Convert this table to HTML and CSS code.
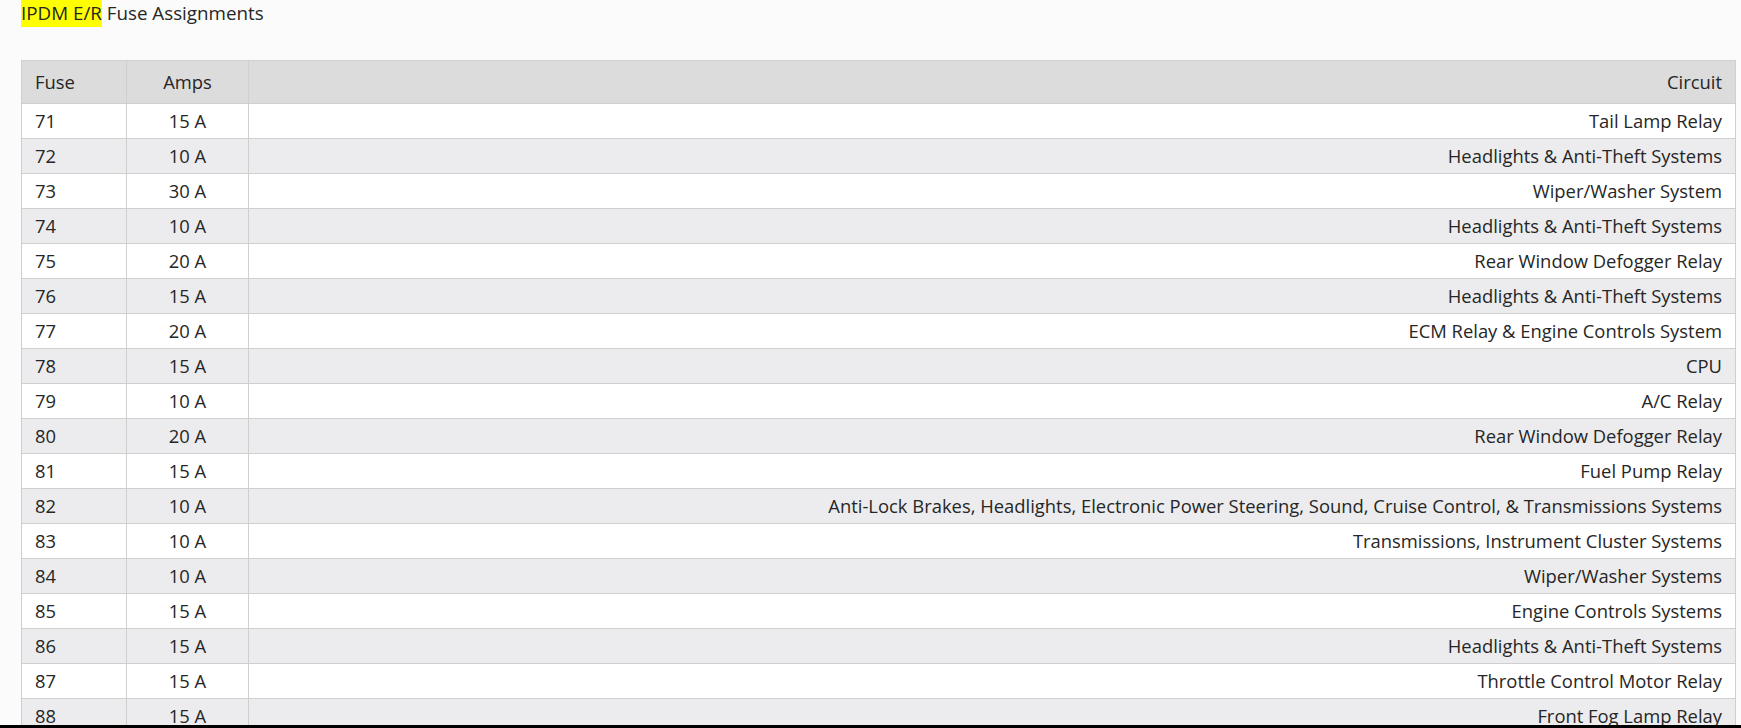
FILE: index.html
```html
<!DOCTYPE html>
<html lang="en">
<head>
<meta charset="utf-8">
<title>IPDM E/R Fuse Assignments</title>
<link rel="stylesheet" href="styles.css">
</head>
<body>
<div class="page">
  <h2 class="title"><span class="mark">IPDM E/R</span> Fuse Assignments</h2>
  <table class="fuses">
    <thead>
      <tr><th class="c-fuse">Fuse</th><th class="c-amps">Amps</th><th class="c-circuit">Circuit</th></tr>
    </thead>
    <tbody>
      <tr><td class="c-fuse">71</td><td class="c-amps">15 A</td><td class="c-circuit">Tail Lamp Relay</td></tr>
      <tr><td class="c-fuse">72</td><td class="c-amps">10 A</td><td class="c-circuit">Headlights &amp; Anti-Theft Systems</td></tr>
      <tr><td class="c-fuse">73</td><td class="c-amps">30 A</td><td class="c-circuit">Wiper/Washer System</td></tr>
      <tr><td class="c-fuse">74</td><td class="c-amps">10 A</td><td class="c-circuit">Headlights &amp; Anti-Theft Systems</td></tr>
      <tr><td class="c-fuse">75</td><td class="c-amps">20 A</td><td class="c-circuit">Rear Window Defogger Relay</td></tr>
      <tr><td class="c-fuse">76</td><td class="c-amps">15 A</td><td class="c-circuit">Headlights &amp; Anti-Theft Systems</td></tr>
      <tr><td class="c-fuse">77</td><td class="c-amps">20 A</td><td class="c-circuit">ECM Relay &amp; Engine Controls System</td></tr>
      <tr><td class="c-fuse">78</td><td class="c-amps">15 A</td><td class="c-circuit">CPU</td></tr>
      <tr><td class="c-fuse">79</td><td class="c-amps">10 A</td><td class="c-circuit">A/C Relay</td></tr>
      <tr><td class="c-fuse">80</td><td class="c-amps">20 A</td><td class="c-circuit">Rear Window Defogger Relay</td></tr>
      <tr><td class="c-fuse">81</td><td class="c-amps">15 A</td><td class="c-circuit">Fuel Pump Relay</td></tr>
      <tr><td class="c-fuse">82</td><td class="c-amps">10 A</td><td class="c-circuit">Anti-Lock Brakes, Headlights, Electronic Power Steering, Sound, Cruise Control, &amp; Transmissions Systems</td></tr>
      <tr><td class="c-fuse">83</td><td class="c-amps">10 A</td><td class="c-circuit">Transmissions, Instrument Cluster Systems</td></tr>
      <tr><td class="c-fuse">84</td><td class="c-amps">10 A</td><td class="c-circuit">Wiper/Washer Systems</td></tr>
      <tr><td class="c-fuse">85</td><td class="c-amps">15 A</td><td class="c-circuit">Engine Controls Systems</td></tr>
      <tr><td class="c-fuse">86</td><td class="c-amps">15 A</td><td class="c-circuit">Headlights &amp; Anti-Theft Systems</td></tr>
      <tr><td class="c-fuse">87</td><td class="c-amps">15 A</td><td class="c-circuit">Throttle Control Motor Relay</td></tr>
      <tr><td class="c-fuse">88</td><td class="c-amps">15 A</td><td class="c-circuit">Front Fog Lamp Relay</td></tr>
    </tbody>
  </table>
</div>
<div class="bottom-bar"></div>
</body>
</html>
```

FILE: styles.css
```css
html, body {
  margin: 0;
  padding: 0;
}
body {
  background-color: #fbfbfb;
  font-family: "Open Sans", "Liberation Sans", sans-serif;
  color: #262626;
  overflow: hidden;
}
.page {
  padding: 0 5px 0 21px;
}
.title {
  margin: 0;
  font-size: 18.8px;
  font-weight: 400;
  line-height: 27px;
  height: 27px;
}
.mark {
  background: #ffff00;
  display: inline-block;
  height: 27px;
}
.fuses {
  margin-top: 33px;
  width: 100%;
  border-collapse: collapse;
  font-size: 18.4px;
  background: #ffffff;
}
.fuses th, .fuses td {
  border: 1px solid #cfcfcf;
  padding: 6px 13px;
  line-height: 22px;
  height: 22px;
  font-weight: 400;
}
.fuses th {
  background: #dcdcdc;
  padding-top: 10px;
  padding-bottom: 10px;
}
.fuses tbody tr:nth-child(even) td {
  background: #ececee;
}
.c-fuse {
  width: 78px;
  text-align: left;
}
.c-amps {
  width: 95px;
  text-align: center;
}
.c-circuit {
  text-align: right;
}
.bottom-bar {
  position: fixed;
  left: 0;
  right: 0;
  bottom: 0;
  height: 3px;
  background: #000;
}
```
